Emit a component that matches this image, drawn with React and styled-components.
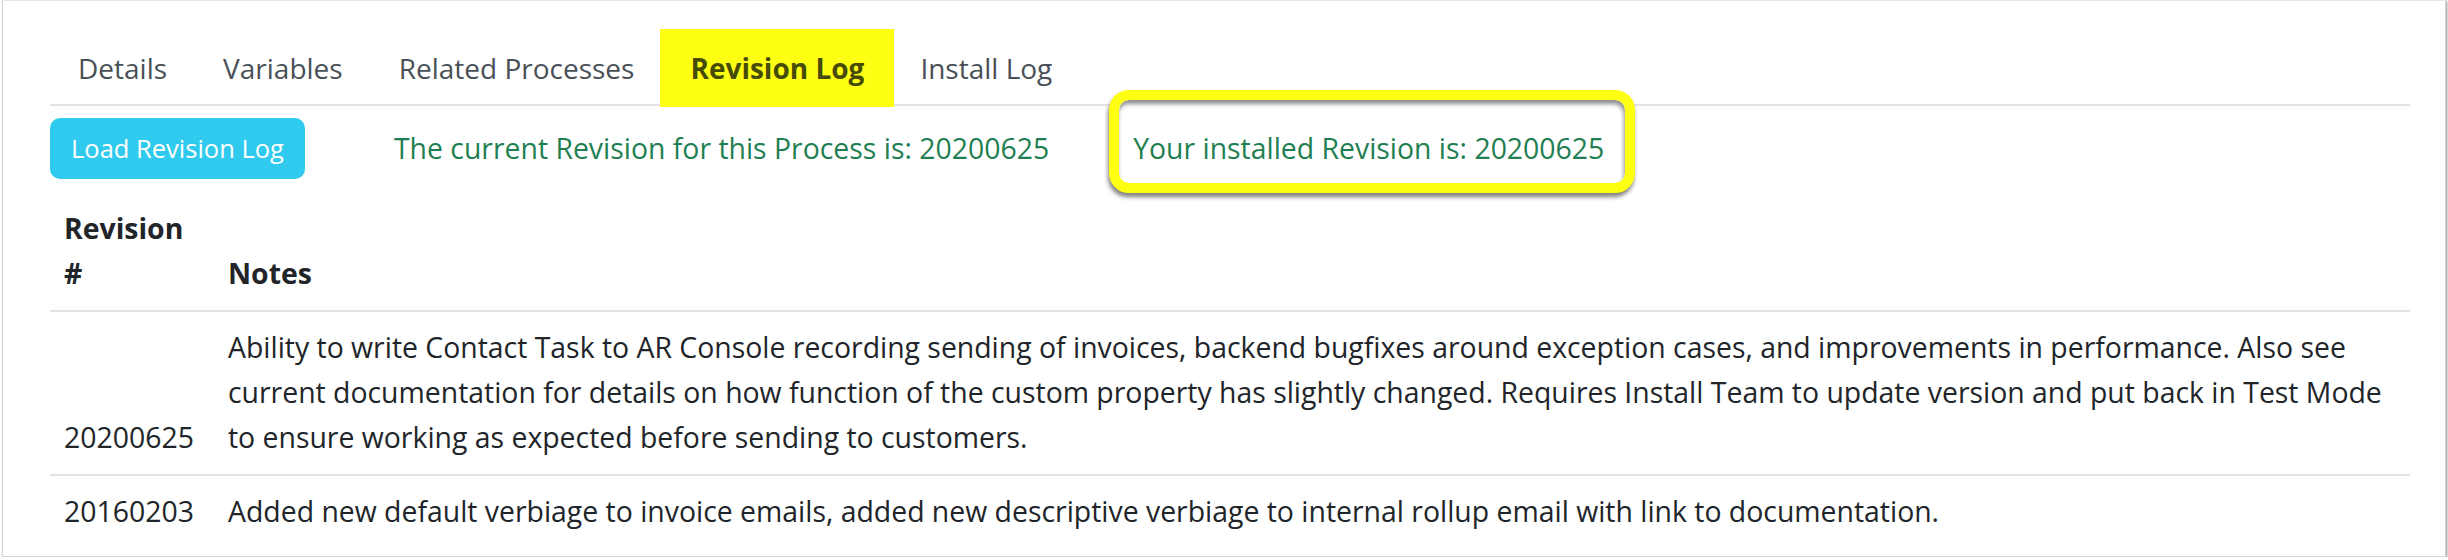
import React from "react";
import styled, { createGlobalStyle } from "styled-components";

const Global = createGlobalStyle`
  html, body { margin: 0; padding: 0; background: #ffffff; }
  body { font-family: "Open Sans", "Noto Sans", sans-serif; }
  * { box-sizing: border-box; }
`;

const Frame = styled.div`
  margin-left: 2px;
  width: 2444px;
  height: 557px;
  border: 1px solid #d4d4d4;
  border-top-color: #e6e6e6;
  box-shadow: 1px 1px 2px rgba(0, 0, 0, 0.45);
  background: #fff;
  padding: 31px 35px 0 47px;
  overflow: hidden;
  font-size: 28.4px;
  line-height: 45px;
  color: #212529;
`;

const TabBar = styled.ul`
  display: flex;
  list-style: none;
  margin: 0;
  padding: 0;
  border-bottom: 2px solid #e1e3e6;
`;

const Tab = styled.li`
  position: relative;
  z-index: 0;
  padding: 12px 26px 13px;
  border: 2px solid transparent;
  border-bottom: none;
  border-radius: 8px 8px 0 0;
  font-size: 28px;
  color: #495057;
  font-weight: ${(p) => (p.$active ? 700 : 400)};
  ${(p) =>
    p.$active &&
    `
    color: #464b06;
    border-color: #e3e33c;
    &::before {
      content: "";
      position: absolute;
      z-index: -1;
      left: -4px;
      right: -4px;
      top: -5px;
      bottom: -3px;
      background: #ffff14;
    }
  `}
`;

const Toolbar = styled.div`
  display: flex;
  align-items: center;
  margin-top: 12px;
`;

const Button = styled.button`
  height: 61px;
  padding: 0 21px;
  border: none;
  border-radius: 10px;
  background: #30caee;
  color: #fff;
  font-family: inherit;
  font-size: 25.5px;
  line-height: 45px;
  cursor: pointer;
`;

const Status = styled.span`
  color: #1f7f52;
  margin-left: ${(p) => p.$gap}px;
  white-space: nowrap;
`;

const Callout = styled(Status)`
  position: relative;
  z-index: 0;
  &::before {
    content: "";
    position: absolute;
    z-index: -1;
    left: -24px;
    right: -31px;
    top: -36px;
    bottom: -22px;
    background: #fff;
    border: 10px solid #ffff14;
    border-radius: 20px;
    box-shadow: -1px 4px 4px rgba(0, 0, 0, 0.5),
      inset -1px 4px 4px rgba(0, 0, 0, 0.45);
  }
`;

const Table = styled.table`
  width: 100%;
  margin-top: 14px;
  border-collapse: collapse;
`;

const Th = styled.th`
  text-align: left;
  vertical-align: bottom;
  font-weight: 700;
  padding: 13px 14px 14px;
  border-bottom: 2px solid #e1e3e6;
  width: ${(p) => (p.$narrow ? "164px" : "auto")};
`;

const Td = styled.td`
  vertical-align: bottom;
  padding: 13px 14px 14px;
  border-bottom: ${(p) => (p.$last ? "none" : "2px solid #e1e3e6")};
`;

const tabs = ["Details", "Variables", "Related Processes", "Revision Log", "Install Log"];

const rows = [
  {
    rev: "20200625",
    notes:
      "Ability to write Contact Task to AR Console recording sending of invoices, backend bugfixes around exception cases, and improvements in performance. Also see current documentation for details on how function of the custom property has slightly changed. Requires Install Team to update version and put back in Test Mode to ensure working as expected before sending to customers.",
  },
  {
    rev: "20160203",
    notes:
      "Added new default verbiage to invoice emails, added new descriptive verbiage to internal rollup email with link to documentation.",
  },
];

export default function App() {
  return (
    <>
      <Global />
      <Frame>
        <TabBar>
          {tabs.map((t) => (
            <Tab key={t} $active={t === "Revision Log"}>
              {t}
            </Tab>
          ))}
        </TabBar>
        <Toolbar>
          <Button>Load Revision Log</Button>
          <Status $gap={89}>The current Revision for this Process is: 20200625</Status>
          <Callout $gap={84}>Your installed Revision is: 20200625</Callout>
        </Toolbar>
        <Table>
          <thead>
            <tr>
              <Th $narrow>Revision #</Th>
              <Th>Notes</Th>
            </tr>
          </thead>
          <tbody>
            {rows.map((r, i) => (
              <tr key={r.rev}>
                <Td $last={i === rows.length - 1}>{r.rev}</Td>
                <Td $last={i === rows.length - 1}>{r.notes}</Td>
              </tr>
            ))}
          </tbody>
        </Table>
      </Frame>
    </>
  );
}
